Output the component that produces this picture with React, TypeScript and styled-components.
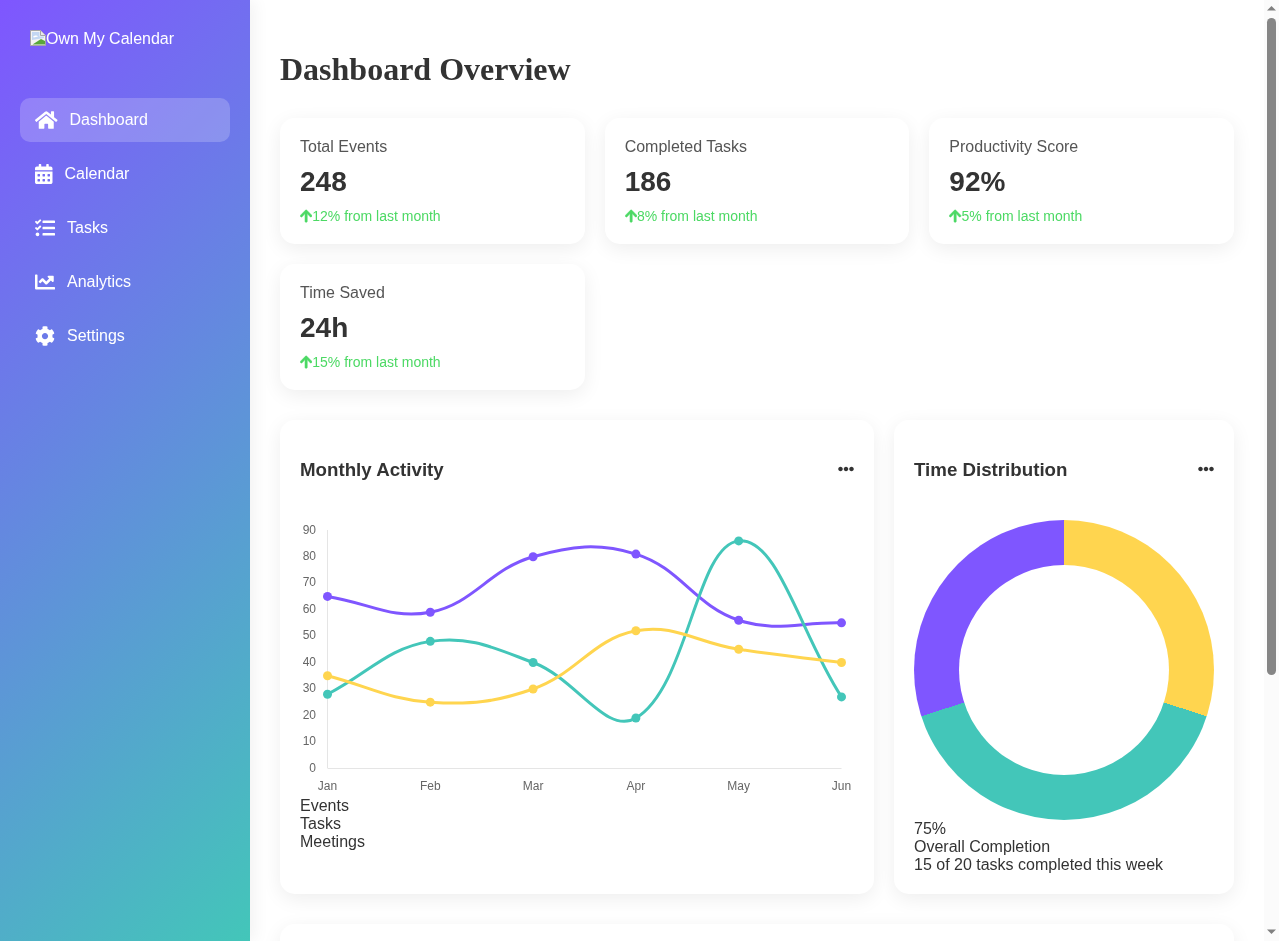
import styled, { createGlobalStyle } from "styled-components";
import { FaArrowUp, FaCalendarAlt, FaChartLine, FaCog, FaEllipsisH, FaHome, FaTasks } from "react-icons/fa";

const GlobalStyle = createGlobalStyle`
  * {
    box-sizing: border-box;
  }
  body {
    margin: 0;
    font-family: "Liberation Sans", Arial, sans-serif;
    background: #fff;
    color: #333;
  }
`;

const Layout = styled.div`
  display: flex;
  min-height: 100vh;
  will-change: transform;
`;

const Sidebar = styled.aside`
  position: sticky;
  top: 0;
  z-index: 1;
  flex: 0 0 250px;
  height: 100vh;
  padding: 30px 20px;
  background: linear-gradient(135deg, #7f56ff, #43c6b9);
  box-shadow: 5px 0 15px rgba(0, 0, 0, 0.05);
  color: #fff;
`;

const Logo = styled.div`
  display: flex;
  align-items: flex-start;
  height: 18px;
  margin: 0 0 50px 10px;
  font-size: 16px;
  line-height: 18px;
  color: #fff;
  svg {
    flex: none;
  }
`;

const Nav = styled.nav`
  display: flex;
  flex-direction: column;
  gap: 10px;
`;

const NavItem = styled.a<{ $active?: boolean; $iconWidth: number }>`
  display: flex;
  align-items: center;
  gap: 12px;
  height: 44px;
  padding: 12px 15px;
  border-radius: 10px;
  font-size: 16px;
  color: #fff;
  background: ${(p) => (p.$active ? "rgba(255, 255, 255, 0.2)" : "transparent")};
  svg {
    width: ${(p) => p.$iconWidth}px;
    height: 20px;
    flex: none;
  }
`;

const Main = styled.main`
  flex: 1;
  min-width: 0;
  padding: 30px;
`;

const Title = styled.h1`
  margin: 21px 0 30px;
  font-family: "Liberation Serif", "Times New Roman", serif;
  font-size: 32px;
  font-weight: 700;
  line-height: 37px;
  color: #333;
`;

const StatGrid = styled.section`
  display: grid;
  grid-template-columns: repeat(auto-fill, minmax(250px, 1fr));
  gap: 20px;
  margin-bottom: 30px;
`;

const Card = styled.div`
  background: #fff;
  border-radius: 15px;
  padding: 20px;
  box-shadow: 0 5px 20px rgba(0, 0, 0, 0.07);
`;

const StatLabel = styled.div`
  font-size: 16px;
  line-height: 18px;
  color: #555;
  margin-bottom: 10px;
`;

const StatValue = styled.div`
  font-size: 28px;
  line-height: 32px;
  font-weight: 700;
  color: #333;
  margin-bottom: 10px;
`;

const StatChange = styled.div`
  display: flex;
  align-items: center;
  font-size: 14px;
  line-height: 16px;
  color: #4cd964;
  svg {
    width: 12.25px;
    height: 14px;
    flex: none;
    stroke-width: 20;
  }
`;

const ChartGrid = styled.section`
  display: grid;
  grid-template-columns: 2fr 1fr;
  gap: 20px;
  margin-bottom: 30px;
`;

const CardHeader = styled.div`
  display: flex;
  justify-content: space-between;
  align-items: center;
  margin-bottom: 20px;
`;

const CardTitle = styled.h3`
  margin: 19px 0;
  font-size: 18.72px;
  line-height: 22px;
  font-weight: 700;
  color: #333;
`;

const MoreButton = styled.span`
  display: flex;
  margin-bottom: 2px;
  font-size: 16px;
  color: #333;
`;

const TextLines = styled.div`
  font-size: 16px;
  line-height: 18px;
  color: #333;
`;

const ChartSvg = styled.svg`
  display: block;
  width: 100%;
  height: 277px;
  text {
    font-family: "Liberation Sans", Arial, sans-serif;
    font-size: 12px;
    fill: #666;
  }
`;

const Donut = styled.div`
  display: flex;
  align-items: center;
  justify-content: center;
  width: 300px;
  height: 300px;
  border-radius: 50%;
  background: conic-gradient(#ffd54f 0 30%, #43c6b9 30% 70%, #7f56ff 70% 100%);
`;

const DonutHole = styled.div`
  width: 210px;
  height: 210px;
  border-radius: 50%;
  background: #fff;
`;

const BottomCard = styled(Card)`
  height: 342px;
`;

/* the window scrollbar of the screenshot */
const ScrollRail = styled.div`
  position: sticky;
  top: 0;
  flex: 0 0 15px;
  height: 100vh;
  display: flex;
  flex-direction: column;
  align-items: center;
  background: #fbfbfb;
`;

const ScrollArrow = styled.svg`
  display: block;
  flex: none;
  width: 15px;
  height: 18px;
  fill: #808080;
`;

const ScrollThumb = styled.div`
  flex: none;
  width: 9px;
  height: 657px;
  border-radius: 5px;
  background: #868686;
`;

const ScrollSpacer = styled.div`
  flex: 1;
`;

type Series = { name: string; color: string; data: number[] };

const months = ["Jan", "Feb", "Mar", "Apr", "May", "Jun"];

const series: Series[] = [
  { name: "Events", color: "#7f56ff", data: [65, 59, 80, 81, 56, 55] },
  { name: "Tasks", color: "#43c6b9", data: [28, 48, 40, 19, 86, 27] },
  { name: "Meetings", color: "#ffd54f", data: [35, 25, 30, 52, 45, 40] },
];

const stats = [
  { label: "Total Events", value: "248", change: "12% from last month" },
  { label: "Completed Tasks", value: "186", change: "8% from last month" },
  { label: "Productivity Score", value: "92%", change: "5% from last month" },
  { label: "Time Saved", value: "24h", change: "15% from last month" },
];

const navItems = [
  { label: "Dashboard", icon: <FaHome />, iconWidth: 22.5, active: true },
  { label: "Calendar", icon: <FaCalendarAlt />, iconWidth: 17.5 },
  { label: "Tasks", icon: <FaTasks />, iconWidth: 20 },
  { label: "Analytics", icon: <FaChartLine />, iconWidth: 20 },
  { label: "Settings", icon: <FaCog />, iconWidth: 20 },
];

// plot area inside the 554x277 svg
const plotLeft = 27.5;
const plotRight = 541.5;
const plotBottom = 248.3;
const plotTop = 10.3;

const px = (i: number) => plotLeft + (i * (plotRight - plotLeft)) / 5;
const py = (v: number) => plotBottom - (v * (plotBottom - plotTop)) / 90;

// same spline as a tension 0.4 line chart
const linePath = (data: number[]) => {
  const pts = data.map((v, i) => ({ x: px(i), y: py(v) }));
  const t = 0.4;
  const controls = pts.map((cur, i) => {
    const prev = pts[i - 1] ?? cur;
    const next = pts[i + 1] ?? cur;
    const d01 = Math.hypot(cur.x - prev.x, cur.y - prev.y);
    const d12 = Math.hypot(next.x - cur.x, next.y - cur.y);
    const s = d01 + d12 || 1;
    const fa = (t * d01) / s;
    const fb = (t * d12) / s;
    return {
      before: { x: cur.x - fa * (next.x - prev.x), y: cur.y - fa * (next.y - prev.y) },
      after: { x: cur.x + fb * (next.x - prev.x), y: cur.y + fb * (next.y - prev.y) },
    };
  });
  let d = `M${pts[0].x} ${pts[0].y}`;
  for (let i = 1; i < pts.length; i++) {
    const a = controls[i - 1].after;
    const b = controls[i].before;
    d += ` C${a.x} ${a.y} ${b.x} ${b.y} ${pts[i].x} ${pts[i].y}`;
  }
  return d;
};

const BrokenImage = () => (
  <svg width="16" height="16" viewBox="0 0 16 16">
    <path d="M0.5 0.5H10.5L15.5 5.5V15.5H0.5Z" fill="#f4f4f4" stroke="#a6a6a6" />
    <path d="M10.5 0.5V5.5H15.5" fill="#e8e8e8" stroke="#a6a6a6" />
    <path d="M2 2H9.5V6.5H14V8L8 9L2 10Z" fill="#c3d7f3" />
    <path d="M3 7C4 5 7 5 8 6.5L4 7.5Z" fill="#fff" />
    <path d="M2.5 14.5L11 9L15 11V14.5Z" fill="#5aa83b" />
  </svg>
);

const ActivityChart = () => (
  <ChartSvg viewBox="0 0 554 277">
    <line x1={plotLeft} y1={10} x2={plotLeft} y2={248} stroke="#e5e5e5" />
    <line x1={plotLeft} y1={248.5} x2={plotRight} y2={248.5} stroke="#e5e5e5" />
    {[0, 10, 20, 30, 40, 50, 60, 70, 80, 90].map((v) => (
      <text key={v} x={16} y={Math.round(py(v) + 3.2)} textAnchor="end">
        {v}
      </text>
    ))}
    {months.map((m, i) => (
      <text key={m} x={px(i)} y={270} textAnchor="middle">
        {m}
      </text>
    ))}
    {series.map((s) => (
      <g key={s.name}>
        <path d={linePath(s.data)} fill="none" stroke={s.color} strokeWidth={3} />
        {s.data.map((v, i) => (
          <circle key={i} cx={px(i)} cy={py(v)} r={4.5} fill={s.color} />
        ))}
      </g>
    ))}
  </ChartSvg>
);

export default function App() {
  return (
    <>
      <GlobalStyle />
      <Layout>
        <Sidebar>
          <Logo>
            <BrokenImage />
            Own My Calendar
          </Logo>
          <Nav>
            {navItems.map((item) => (
              <NavItem key={item.label} $active={item.active} $iconWidth={item.iconWidth}>
                {item.icon}
                {item.label}
              </NavItem>
            ))}
          </Nav>
        </Sidebar>
        <Main>
          <Title>Dashboard Overview</Title>
          <StatGrid>
            {stats.map((s) => (
              <Card key={s.label}>
                <StatLabel>{s.label}</StatLabel>
                <StatValue>{s.value}</StatValue>
                <StatChange>
                  <FaArrowUp />
                  {s.change}
                </StatChange>
              </Card>
            ))}
          </StatGrid>
          <ChartGrid>
            <Card>
              <CardHeader>
                <CardTitle>Monthly Activity</CardTitle>
                <MoreButton>
                  <FaEllipsisH />
                </MoreButton>
              </CardHeader>
              <ActivityChart />
              <TextLines>
                {series.map((s) => (
                  <div key={s.name}>{s.name}</div>
                ))}
              </TextLines>
            </Card>
            <Card>
              <CardHeader>
                <CardTitle>Time Distribution</CardTitle>
                <MoreButton>
                  <FaEllipsisH />
                </MoreButton>
              </CardHeader>
              <Donut>
                <DonutHole />
              </Donut>
              <TextLines>
                <div>75%</div>
                <div>Overall Completion</div>
                <div>15 of 20 tasks completed this week</div>
              </TextLines>
            </Card>
          </ChartGrid>
          <BottomCard />
        </Main>
        <ScrollRail>
          <ScrollArrow viewBox="0 0 15 18">
            <path d="M7.5 6L12 10.5H3Z" />
          </ScrollArrow>
          <ScrollThumb />
          <ScrollSpacer />
          <ScrollArrow viewBox="0 0 15 18">
            <path d="M3 6.5H12L7.5 11Z" />
          </ScrollArrow>
        </ScrollRail>
      </Layout>
    </>
  );
}
